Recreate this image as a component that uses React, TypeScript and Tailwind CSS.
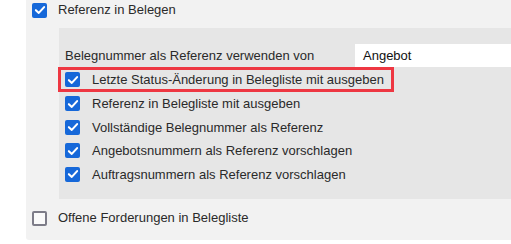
import React from 'react';

const font = { fontFamily: '"Liberation Sans", Arial, sans-serif' };

function Box({ checked }: { checked: boolean }) {
  if (!checked) {
    return <span className="block w-[15px] h-[15px] shrink-0 rounded-[2px] border-2 border-[#7d7c88] bg-[#fafafa]" />;
  }
  return (
    <span className="flex items-center justify-center w-[15px] h-[15px] shrink-0 rounded-[2px] bg-[#1668d9]">
      <svg viewBox="0 0 14 14" className="w-[12px] h-[12px]">
        <path d="M2.2 7.2 L5.6 10.4 L11.8 3.6" fill="none" stroke="#fff" strokeWidth="2.4" strokeLinecap="round" strokeLinejoin="round" />
      </svg>
    </span>
  );
}

const subOptions = [
  'Referenz in Belegliste mit ausgeben',
  'Vollständige Belegnummer als Referenz',
  'Angebotsnummern als Referenz vorschlagen',
  'Auftragsnummern als Referenz vorschlagen',
];

export default function App() {
  return (
    <div className="w-[511px] h-[244px] bg-white overflow-hidden text-[13px] text-[#2a2a2a]" style={font}>
      <div className="ml-[26px] h-[240px] bg-[#f2f2f2] rounded-bl-[3px]">
        {/* Referenz in Belegen */}
        <div className="flex items-center h-[20px] pl-[6px] gap-[11px]">
          <Box checked />
          <span>Referenz in Belegen</span>
        </div>

        {/* Nested settings */}
        <div className="ml-[33px] mt-[8px] bg-[#e6e6e6] pt-[16px] pb-[13px]">
          <div className="flex items-center h-[23px] pl-[6px]">
            <span className="w-[290px]">Belegnummer als Referenz verwenden von</span>
            <div className="flex-1 h-[23px] bg-white flex items-center pl-[8px] text-[#111]">Angebot</div>
          </div>

          <div className="-ml-px inline-flex items-center h-[25px] border-[3px] border-[#ee3742] pl-[4px] pr-[7px] gap-[12px]">
            <Box checked />
            <span>Letzte Status-Änderung in Belegliste mit ausgeben</span>
          </div>

          {subOptions.map((label) => (
            <div key={label} className="flex items-center h-[23.5px] pl-[6px] gap-[12px]">
              <Box checked />
              <span>{label}</span>
            </div>
          ))}
        </div>

        {/* Offene Forderungen */}
        <div className="flex items-center h-[22px] mt-[8px] pl-[6px] gap-[11px]">
          <Box checked={false} />
          <span>Offene Forderungen in Belegliste</span>
        </div>
      </div>
    </div>
  );
}
